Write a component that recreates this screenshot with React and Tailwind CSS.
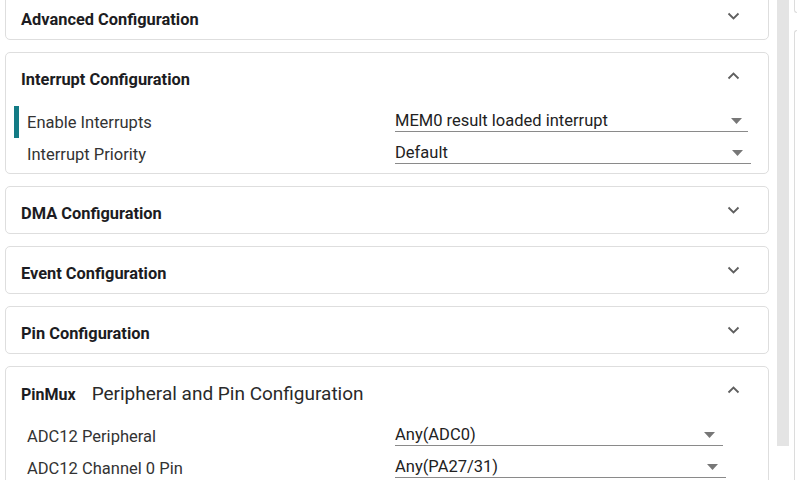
import React from 'react';

const font = { fontFamily: 'Roboto, "Liberation Sans", sans-serif' };

const Chevron = ({ up }) => (
  <svg width="13" height="8" viewBox="0 0 13 8" className="text-[#5f5f5f]">
    <polyline
      points={up ? '1.5,6.5 6.5,1.5 11.5,6.5' : '1.5,1.5 6.5,6.5 11.5,1.5'}
      fill="none"
      stroke="currentColor"
      strokeWidth="1.8"
    />
  </svg>
);

const Caret = ({ right }) => (
  <svg
    width="11"
    height="6"
    viewBox="0 0 11 6"
    className="absolute top-[9px] text-[#777]"
    style={{ right }}
  >
    <polygon points="0,0 11,0 5.5,6" fill="currentColor" />
  </svg>
);

const Row = ({ label, value, width, caret, active }) => (
  <div className="flex h-[32px] items-start">
    <div className={`ml-[8px] h-[32px] w-[5px] ${active ? 'bg-[#137b85]' : ''}`} />
    <div className="ml-[8px] w-[368px] pt-[5px] text-[16.5px] leading-[24px] text-[#333]">{label}</div>
    <div
      className="relative mt-[3px] h-[23px] border-b border-[#8a8a8a] pt-[1px] text-[16.5px] leading-[22px] text-[#222]"
      style={{ width }}
    >
      {value}
      <Caret right={caret} />
    </div>
  </div>
);

const Header = ({ children, up }) => (
  <div className="flex h-[46px] items-center justify-between pl-[15px] pr-[28px]">
    <div className="flex items-baseline pt-[8px]">{children}</div>
    <Chevron up={up} />
  </div>
);

const Title = ({ children }) => (
  <span className="text-[16.4px] font-bold leading-[24px] text-[#1c1c22]">{children}</span>
);

const Card = ({ children, className = '' }) => (
  <div className={`w-[764px] rounded-[5px] border border-[#dedede] bg-white ${className}`}>{children}</div>
);

export default function App() {
  return (
    <div className="flex h-[480px] w-[797px] overflow-hidden bg-white" style={font}>
      <div className="flex w-[777px] flex-col gap-[12px] pl-[5px]">
        <Card className="mt-[-8px]">
          <Header>
            <Title>Advanced Configuration</Title>
          </Header>
        </Card>

        <Card>
          <Header up>
            <Title>Interrupt Configuration</Title>
          </Header>
          <div className="pb-[3px] pt-[7px]">
            <Row label="Enable Interrupts" value="MEM0 result loaded interrupt" width={353} caret={6} active />
            <Row label="Interrupt Priority" value="Default" width={356} caret={8} />
          </div>
        </Card>

        <Card>
          <Header>
            <Title>DMA Configuration</Title>
          </Header>
        </Card>

        <Card>
          <Header>
            <Title>Event Configuration</Title>
          </Header>
        </Card>

        <Card>
          <Header>
            <Title>Pin Configuration</Title>
          </Header>
        </Card>

        <Card className="pb-[20px]">
          <Header up>
            <span className="text-[16px] font-bold leading-[24px] text-[#1c1c22]">PinMux</span>
            <span className="ml-[16px] text-[19px] leading-[24px] text-[#2a2a2a]">
              Peripheral and Pin Configuration
            </span>
          </Header>
          <div className="pt-[7px]">
            <Row label="ADC12 Peripheral" value="Any(ADC0)" width={328} caret={8} />
            <Row label="ADC12 Channel 0 Pin" value="Any(PA27/31)" width={331} caret={8} />
          </div>
        </Card>
      </div>

      <div className="h-[446px] w-[12px] bg-[#e4e4e4]" />

      <div className="ml-[5px] flex w-[3px] flex-col">
        <div className="h-[13px] rounded-bl-[4px] border-b border-l border-[#dcdcdc]" />
        <div className="mt-[17px] flex-1 rounded-tl-[4px] border-l border-t border-[#dcdcdc]" />
      </div>
    </div>
  );
}
